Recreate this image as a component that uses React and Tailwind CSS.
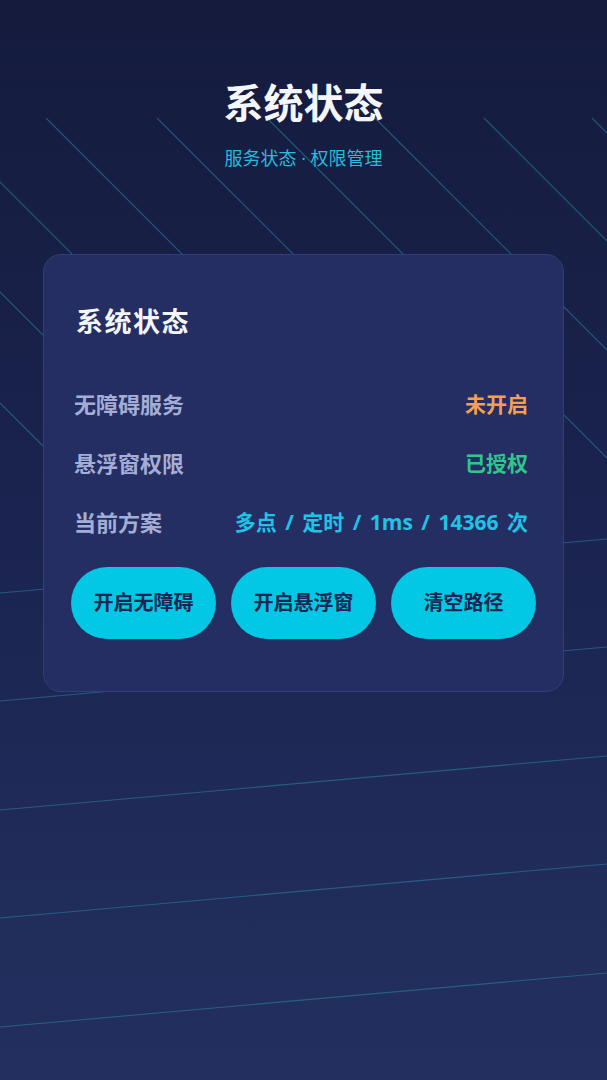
import React from "react";

const diagC = [-403, -292, -182, -72, 39, 149, 257, 366, 474];
const horizY = [593, 701, 810, 918, 1027];

function Backdrop() {
  return (
    <svg
      className="absolute inset-0 pointer-events-none"
      width="607"
      height="1080"
      viewBox="0 0 607 1080"
    >
      <defs>
        <clipPath id="band">
          <rect x="0" y="118" width="607" height="362" />
        </clipPath>
      </defs>
      <g clipPath="url(#band)" stroke="#2b8fb0" strokeOpacity="0.55" strokeWidth="1.1">
        {diagC.map((c) => (
          <line key={c} x1={c + 118} y1={118} x2={c + 480} y2={480} />
        ))}
      </g>
      <g stroke="#2b8fb0" strokeOpacity="0.5" strokeWidth="1.1">
        {horizY.map((y) => (
          <line key={y} x1={0} y1={y} x2={607} y2={y - 54} />
        ))}
      </g>
    </svg>
  );
}

function Row({ label, value, color }) {
  return (
    <div className="flex h-[59px] items-center justify-between pl-[3px] pr-[8px]">
      <span className="text-[22px] font-bold text-[#a4add6]">{label}</span>
      <span className={`text-[21px] font-bold [word-spacing:3px] ${color}`}>{value}</span>
    </div>
  );
}

function Btn({ children }) {
  return (
    <button className="flex h-[72px] w-[145px] items-center justify-center rounded-full bg-[#03c8e5] text-[20px] font-bold text-[#1a2752]">
      {children}
    </button>
  );
}

export default function App() {
  return (
    <div
      className="relative min-h-[1080px] w-full overflow-hidden bg-gradient-to-b from-[#141b3d] via-[#1b2450] to-[#23305f]"
      style={{ fontFamily: '"Open Sans", "Noto Sans CJK SC", sans-serif' }}
    >
      <Backdrop />
      <div className="relative flex flex-col items-center pt-[79px]">
        <h1 className="text-[40px] font-bold leading-[48px] text-[#f4f6fc]">系统状态</h1>
        <p className="mt-[19px] text-[18px] leading-[24px] text-[#27bbdc]">服务状态 · 权限管理</p>
      </div>
      <div className="relative mx-[43px] mt-[84px] rounded-[18px] border border-[#323e77] bg-[#242e62] px-[27px] pt-[50px] pb-[52px]">
        <h2 className="pl-[5px] text-[27px] font-bold leading-[34px] tracking-[1.5px] text-[#f4f6fc]">系统状态</h2>
        <div className="mt-[36px] flex flex-col">
          <Row label="无障碍服务" value="未开启" color="text-[#f4a04f]" />
          <Row label="悬浮窗权限" value="已授权" color="text-[#30c68c]" />
          <Row label="当前方案" value="多点 / 定时 / 1ms / 14366 次" color="text-[#20c3e6]" />
        </div>
        <div className="mt-[15px] flex justify-between">
          <Btn>开启无障碍</Btn>
          <Btn>开启悬浮窗</Btn>
          <Btn>清空路径</Btn>
        </div>
      </div>
    </div>
  );
}
